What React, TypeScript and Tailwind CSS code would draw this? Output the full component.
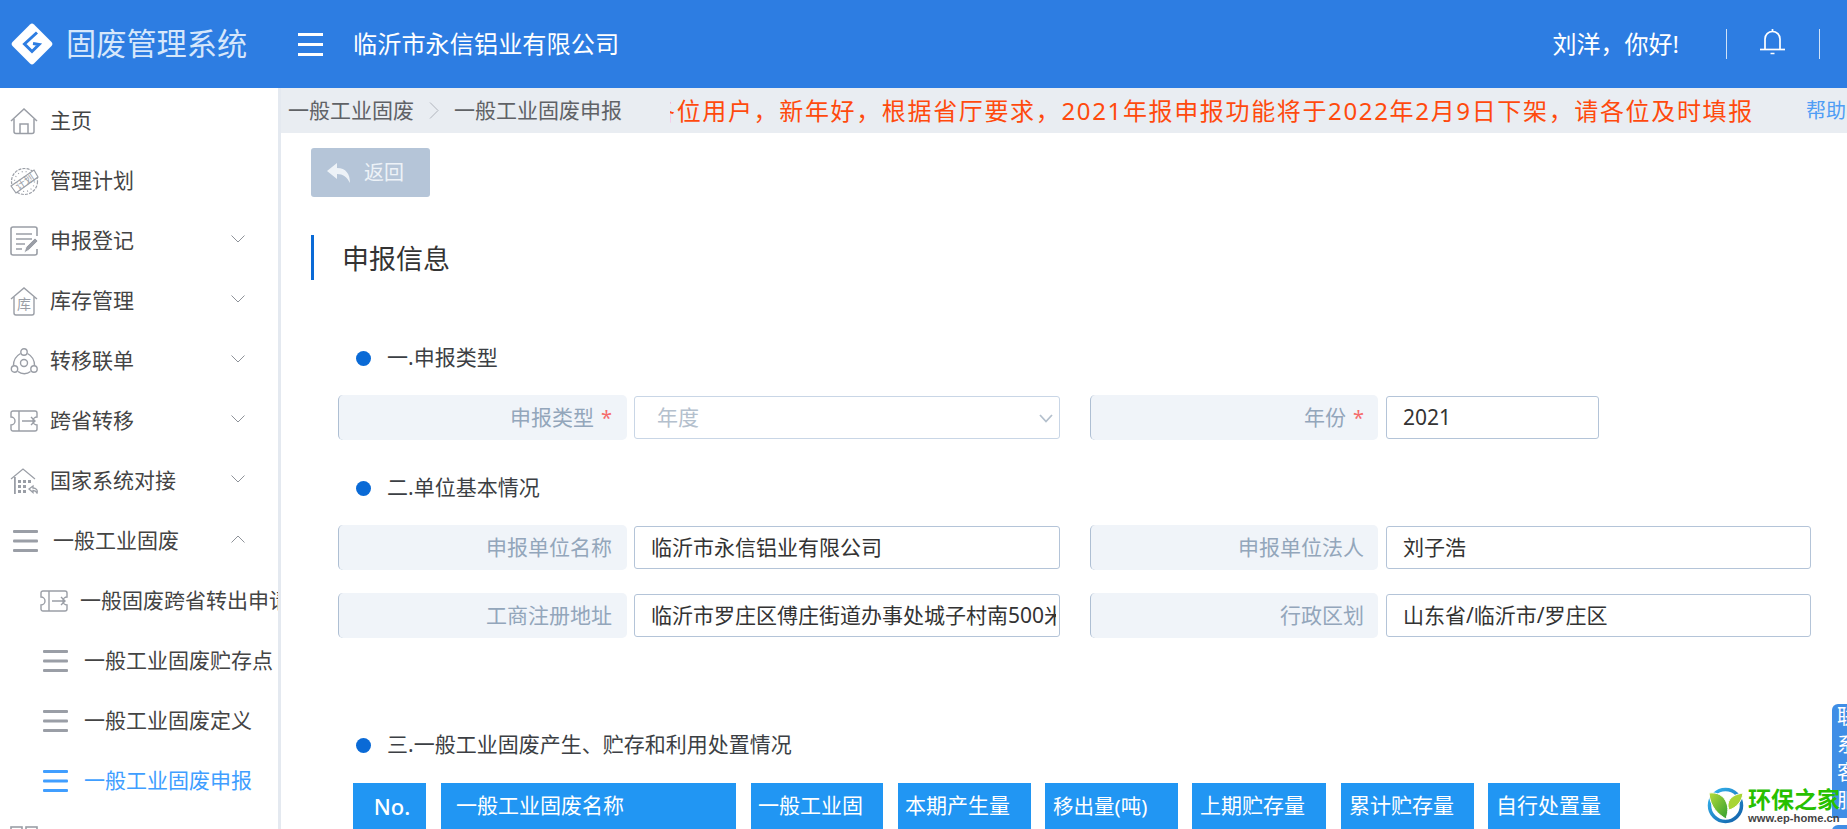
import type { ReactNode } from "react";

const GREY = "#9a9ea6";

const HomeIcon = () => (
  <svg className="shrink-0" width="28" height="27" viewBox="0 0 28 27" fill="none" stroke={GREY} strokeWidth="1.5">
    <path d="M1 13 14 1l13 12" />
    <path d="M4 11v12.500a2 2 0 0 0 2 2h16a2 2 0 0 0 2-2V11" />
    <path d="M10 25.500V16h8v9.500" />
  </svg>
);

const PlanIcon = () => (
  <svg className="shrink-0" width="29" height="31" viewBox="0 0 29 31" fill="none" stroke={GREY} strokeWidth="1.200">
    <circle cx="14.500" cy="15.500" r="13" strokeDasharray="3 1.200" />
    <circle cx="14.500" cy="15.500" r="10" strokeDasharray="1 3" />
    <path d="M1 20 24 4l4 7L6 27z" fill="#fff" />
    <text x="14.500" y="19.500" fontSize="10" fill={GREY} stroke="none" textAnchor="middle" transform="rotate(-33 14.500 15.500)">
      计划
    </text>
  </svg>
);

const DocIcon = () => (
  <svg className="shrink-0" width="28" height="30" viewBox="0 0 28 30" fill="none" stroke={GREY} strokeWidth="1.600">
    <path d="M27 10V3a2 2 0 0 0-2-2H3a2 2 0 0 0-2 2v24a2 2 0 0 0 2 2h22a2 2 0 0 0 2-2v-4" />
    <path d="M6 8h16M6 13h16M6 18h9M6 23h6" />
    <path d="M14 27l2-6 9-9 3 3-9 9z" fill={GREY} stroke="#fff" strokeWidth=".8" />
  </svg>
);

const StoreIcon = () => (
  <svg className="shrink-0" width="28" height="29" viewBox="0 0 28 29" fill="none" stroke={GREY} strokeWidth="1.400">
    <path d="M1 12 14 1l13 11" />
    <path d="M4 10v16a2 2 0 0 0 2 2h16a2 2 0 0 0 2-2V10" />
    <text x="14" y="22" fontSize="14" fill={GREY} stroke="none" textAnchor="middle">
      库
    </text>
  </svg>
);

const ShareIcon = () => (
  <svg className="shrink-0" width="28" height="27" viewBox="0 0 28 27" fill="none" stroke={GREY} strokeWidth="1.400">
    <circle cx="14" cy="4" r="3.200" />
    <circle cx="4.500" cy="21" r="3.200" />
    <circle cx="24" cy="21" r="3.200" />
    <circle cx="14" cy="15" r="3.500" />
    <path d="M10.500 5.500C6 8 3.500 12 3.500 17.500M17.500 5.500C22 8 24.500 12 24.500 17.500M8 23.500c3.500 3 9 3 12.500 0" />
  </svg>
);

const TicketIcon = () => (
  <svg className="shrink-0" width="28" height="22" viewBox="0 0 28 22" fill="none" stroke={GREY} strokeWidth="1.400">
    <path d="M3 1h22a2 2 0 0 1 2 2v4a4 4 0 0 0 0 8v4a2 2 0 0 1-2 2H3a2 2 0 0 1-2-2v-4a4 4 0 0 0 0-8V3a2 2 0 0 1 2-2z" />
    <path d="M9 1v20M12 11h13M21 7l4 4-4 4" />
  </svg>
);

const BuildingIcon = () => (
  <svg className="shrink-0" width="28" height="26" viewBox="0 0 28 26" fill={GREY} stroke="none">
    <path d="M1 11 13 1l12 10" fill="none" stroke={GREY} strokeWidth="1.200" />
    <path d="M4 9h1.800v17H4z" />
    <path d="M8 12h3v3H8zM13 12h3v3h-3zM18 12h3v3h-3zM8 17h3v3H8zM13 17h3v3h-3zM8 22h3v3H8zM13 22h3v3h-3z" />
    <path d="M19 21l4-3v2c3 0 5 2 4 5-1-2-2-2.500-4-2.500v2z" fill="none" stroke={GREY} strokeWidth="1.300" />
  </svg>
);

const BarsIcon = ({ color = GREY }: { color?: string }) => (
  <svg className="shrink-0" width="25" height="22" viewBox="0 0 25 22" fill={color}>
    <rect y="0" width="25" height="3" rx="1" />
    <rect y="9.500" width="25" height="3" rx="1" />
    <rect y="19" width="25" height="3" rx="1" />
  </svg>
);

const GridIcon = () => (
  <svg className="shrink-0" width="28" height="30" viewBox="0 0 28 30" fill="none" stroke={GREY} strokeWidth="1.600">
    <rect x="1" y="1" width="11" height="12" />
    <rect x="16" y="1" width="11" height="12" />
  </svg>
);

const Chevron = ({ up = false }: { up?: boolean }) => (
  <svg width="14" height="8" viewBox="0 0 14 8" fill="none" stroke="#8e9299" strokeWidth="1" className="-mt-1 shrink-0">
    <path d={up ? "M.5 7.500 7 1l6.500 6.500" : "M.5.500 7 7 13.500.500"} />
  </svg>
);

const NavItem = ({ icon, label, open, up }: { icon: ReactNode; label: string; open?: boolean; up?: boolean }) => (
  <div className="flex h-[60px] items-center pl-[10px] pr-[33px]">
    <span className="flex w-[28px] shrink-0 justify-center">{icon}</span>
    <span className="ml-[12px] text-[21px] text-[#444]">{label}</span>
    {open && (
      <span className="ml-auto flex">
        <Chevron up={up} />
      </span>
    )}
  </div>
);

const SubItem = ({ icon, label, active }: { icon: ReactNode; label: string; active?: boolean }) => (
  <div className={`flex h-[60px] items-center pl-[43px] ${active ? "text-[#409eff]" : "text-[#444]"}`}>
    <span className="flex w-[25px] shrink-0">{icon}</span>
    <span className="ml-[16px] whitespace-nowrap text-[21px]">{label}</span>
  </div>
);

const Sidebar = () => (
  <aside className="h-full w-[281px] shrink-0 overflow-hidden border-r-[3px] border-[#e4e9f0] bg-white pt-[3px]">
    <NavItem icon={<HomeIcon />} label="主页" />
    <NavItem icon={<PlanIcon />} label="管理计划" />
    <NavItem icon={<DocIcon />} label="申报登记" open />
    <NavItem icon={<StoreIcon />} label="库存管理" open />
    <NavItem icon={<ShareIcon />} label="转移联单" open />
    <NavItem icon={<TicketIcon />} label="跨省转移" open />
    <NavItem icon={<BuildingIcon />} label="国家系统对接" open />
    <div className="flex h-[60px] items-center pl-[13px] pr-[33px]">
      <BarsIcon />
      <span className="ml-[15px] text-[21px] text-[#444]">一般工业固废</span>
      <span className="ml-auto flex">
        <Chevron up />
      </span>
    </div>
    <div className="flex h-[60px] items-center pl-[40px] text-[#444]">
      <TicketIcon />
      <span className="ml-[12px] whitespace-nowrap text-[21px]">一般固废跨省转出申请</span>
    </div>
    <SubItem icon={<BarsIcon />} label="一般工业固废贮存点" />
    <SubItem icon={<BarsIcon />} label="一般工业固废定义" />
    <SubItem icon={<BarsIcon color="#409eff" />} label="一般工业固废申报" active />
    <div className="flex h-[60px] items-center pl-[10px]">
      <GridIcon />
    </div>
  </aside>
);

const Header = () => (
  <header className="flex h-[88px] shrink-0 items-center bg-[#2d7de2] pl-[11px] pr-[27px] text-white">
    <svg className="shrink-0" width="42" height="42" viewBox="0 0 42 42">
      <path d="M19 1.500a3 3 0 0 1 4 0l17.500 17.500a3 3 0 0 1 0 4L23 40.500a3 3 0 0 1-4 0L1.500 23a3 3 0 0 1 0-4z" fill="#fff" />
      <path d="M26 9.500 13.500 21l7.500 7.500L28 21.500l-6-1" fill="none" stroke="#2d7de2" strokeWidth="3" />
    </svg>
    <span className="ml-[13px] w-[181px] whitespace-nowrap text-[30.200px] text-[#d6e7fb]">固废管理系统</span>
    <span className="ml-[51px] flex flex-col gap-[7px]">
      <i className="block h-[3px] w-[25px] bg-white" />
      <i className="block h-[3px] w-[25px] bg-white" />
      <i className="block h-[3px] w-[25px] bg-white" />
    </span>
    <span className="ml-[30px] whitespace-nowrap text-[24.200px]">临沂市永信铝业有限公司</span>
    <span className="ml-auto whitespace-nowrap text-[24px]">刘洋，你好!</span>
    <i className="ml-[47px] block h-[30px] w-px bg-[#cfe2f8]" />
    <svg className="ml-[32px] -mt-[5px] shrink-0" width="27" height="27" viewBox="0 0 27 27" fill="none" stroke="#fff" strokeWidth="1.700">
      <path d="M6 21.500V11a7.500 7.500 0 0 1 15 0v10.500" />
      <path d="M13.500 3.500V1" />
      <path d="M1 21.500h25" />
      <path d="M11.500 25.500h4" strokeWidth="1.500" />
    </svg>
    <i className="ml-[33px] block h-[30px] w-px bg-[#cfe2f8]" />
  </header>
);

const Crumbs = () => (
  <div className="flex h-[45px] shrink-0 items-center whitespace-nowrap bg-[#e9edf2] pl-[7px]">
    <span className="shrink-0 text-[21px] text-[#606266]">一般工业固废</span>
    <svg className="mx-[15px] shrink-0" width="10" height="17" viewBox="0 0 10 17" fill="none" stroke="#b0b4bc" strokeWidth="1">
      <path d="M1 .500 9 8.500l-8 8" />
    </svg>
    <span className="shrink-0 text-[21px] text-[#606266]">一般工业固废申报</span>
    <div className="ml-[48px] w-[1120px] shrink-0 overflow-hidden">
      <div className="-ml-[19px] text-[24px] tracking-[1.650px] text-[#ff4a0d]">
        各位用户，新年好，根据省厅要求，2021年报申报功能将于2022年2月9日下架，请各位及时填报
      </div>
    </div>
    <span className="ml-[16px] shrink-0 text-[20px] text-[#4f9df5]">帮助中心</span>
  </div>
);

const SectionHead = ({ children, className }: { children: string; className: string }) => (
  <div className={`ml-[75px] flex h-[30px] items-center gap-[16px] ${className}`}>
    <i className="block h-[15px] w-[15px] rounded-full bg-[#0a6ad6]" />
    <span className="text-[21px] text-[#3c3f44]">{children}</span>
  </div>
);

const Label = ({ text, required, pad, width }: { text: string; required?: boolean; pad: string; width: string }) => (
  <div
    className={`flex h-[45px] ${width} ${pad} shrink-0 items-center justify-end rounded-[5px] border-l border-[#aebfd3] bg-[#f0f4f9] pt-px text-[21px] text-[#93a6bb]`}
  >
    {text}
    {required && <span className="ml-[7px] text-[20px] text-[#f56c6c]">*</span>}
  </div>
);

const Field = ({ value, width }: { value: string; width: string }) => (
  <div
    className={`flex h-[43px] ${width} shrink-0 items-center rounded-[3px] border border-[#b4c4d8] bg-white pl-[16px] pr-[3px] pt-px text-[21px] text-[#333]`}
  >
    <span className="min-w-0 overflow-hidden whitespace-nowrap">{value}</span>
  </div>
);

const Form = () => (
  <>
    <SectionHead className="mt-[63px]">一.申报类型</SectionHead>
    <div className="ml-[57px] mt-[22px] flex items-center">
      <Label text="申报类型" required pad="pr-[15px]" width="w-[289px]" />
      <div className="ml-[7px] flex h-[43px] w-[426px] items-center justify-between rounded-[3px] border border-[#c9d6e6] bg-white pl-[22px] pr-[6px] pt-px text-[21px] text-[#b4c0cd]">
        年度
        <svg className="shrink-0" width="14" height="9" viewBox="0 0 14 9" fill="none" stroke="#b4c0cd" strokeWidth="1.800">
          <path d="M1 1l6 6.500L13 1" />
        </svg>
      </div>
      <div className="ml-[30px]">
        <Label text="年份" required pad="pr-[14px]" width="w-[288px]" />
      </div>
      <div className="ml-[8px]">
        <Field value="2021" width="w-[213px]" />
      </div>
    </div>
    <SectionHead className="mt-[33px]">二.单位基本情况</SectionHead>
    <div className="ml-[57px] mt-[22px] flex items-center">
      <Label text="申报单位名称" pad="pr-[15px]" width="w-[289px]" />
      <div className="ml-[7px]">
        <Field value="临沂市永信铝业有限公司" width="w-[426px]" />
      </div>
      <div className="ml-[30px]">
        <Label text="申报单位法人" pad="pr-[14px]" width="w-[288px]" />
      </div>
      <div className="ml-[8px]">
        <Field value="刘子浩" width="w-[425px]" />
      </div>
    </div>
    <div className="ml-[57px] mt-[23px] flex items-center">
      <Label text="工商注册地址" pad="pr-[15px]" width="w-[289px]" />
      <div className="ml-[7px]">
        <Field value="临沂市罗庄区傅庄街道办事处城子村南500米" width="w-[426px]" />
      </div>
      <div className="ml-[30px]">
        <Label text="行政区划" pad="pr-[14px]" width="w-[288px]" />
      </div>
      <div className="ml-[8px]">
        <Field value="山东省/临沂市/罗庄区" width="w-[425px]" />
      </div>
    </div>
  </>
);

const columns = [
  { label: "No.", cls: "w-[73px] justify-center pl-[5px] text-[22px] font-medium" },
  { label: "一般工业固废名称", cls: "ml-[15px] w-[295px] pl-[15px] text-[21px]" },
  { label: "一般工业固", cls: "ml-[15px] w-[132px] pl-[7px] text-[21px]" },
  { label: "本期产生量", cls: "ml-[15px] w-[133px] pl-[7px] text-[21px]" },
  { label: "移出量(吨)", cls: "ml-[14px] w-[133px] pl-[8px] text-[20.500px]" },
  { label: "上期贮存量", cls: "ml-[14px] w-[134px] pl-[8px] text-[21px]" },
  { label: "累计贮存量", cls: "ml-[15px] w-[133px] pl-[8px] text-[21px]" },
  { label: "自行处置量", cls: "ml-[14px] w-[132px] pl-[8px] text-[21px]" },
];

const WasteTable = () => (
  <div className="ml-[72px] mt-[23px] flex">
    {columns.map((col) => (
      <div key={col.label} className={`flex h-[46px] shrink-0 items-center whitespace-nowrap bg-[#2196f3] text-white ${col.cls}`}>
        {col.label}
      </div>
    ))}
  </div>
);

const Watermark = () => (
  <div className="absolute left-[1707px] top-[787px] flex items-start">
    <svg className="shrink-0" width="37" height="37" viewBox="0 0 37 37" fill="none">
      <defs>
        <linearGradient id="leafA" x1="0" y1="0" x2="1" y2="1">
          <stop offset="0" stopColor="#b7dc3a" />
          <stop offset="1" stopColor="#2f9e2f" />
        </linearGradient>
        <linearGradient id="ringA" x1="0" y1="0" x2="1" y2="1">
          <stop offset="0" stopColor="#35b6f0" />
          <stop offset="1" stopColor="#125fa8" />
        </linearGradient>
      </defs>
      <circle cx="18.500" cy="18.500" r="16" stroke="url(#ringA)" strokeWidth="3.500" />
      <path d="M2 6c8-1 15 2 18 11 2 6 0 11-1 15C11 27 3 20 2 6z" fill="url(#leafA)" stroke="#fff" strokeWidth="1" />
      <path d="M36 6c-7 1-14 4-15 11 0 2 0 3 1 6 7-2 13-8 14-17z" fill="#a8d535" stroke="#fff" strokeWidth="1" />
    </svg>
    <div className="ml-[4px] flex flex-col whitespace-nowrap">
      <span className="text-[23px] font-bold leading-[24px] text-[#27c000]">环保之家</span>
      <span className="font-['Liberation_Sans',sans-serif] text-[11.200px] font-bold leading-[14px] text-[#444]">www.ep-home.cn</span>
    </div>
  </div>
);

const FloatTabs = () => (
  <>
    <div className="absolute right-0 top-[704px] flex h-[114px] w-[15px] flex-col gap-[8px] overflow-hidden rounded-tl-[6px] bg-[#3f8ee6] pl-[5px] pt-[3px] text-[20px] leading-[20px] text-white">
      <span className="whitespace-nowrap">联</span>
      <span className="whitespace-nowrap">系</span>
      <span className="whitespace-nowrap">客</span>
      <span className="whitespace-nowrap">服</span>
    </div>
    <div className="absolute right-0 top-[825px] h-[20px] w-[15px] rounded-tl-[6px] bg-[#3f8ee6]" />
  </>
);

export default function App() {
  return (
    <div className="relative flex h-screen w-screen flex-col overflow-hidden bg-white font-['Noto_Sans','Noto_Sans_CJK_SC',sans-serif]">
      <Header />
      <div className="flex min-h-0 flex-1">
        <Sidebar />
        <main className="min-w-0 flex-1">
          <Crumbs />
          <button className="ml-[30px] mt-[15px] flex h-[49px] w-[119px] items-center rounded-[3px] bg-[#b5c5d8] pl-[16px] text-[20px] text-[#edf2f7]">
            <svg className="shrink-0" width="24" height="20" viewBox="0 0 24 20" fill="#edf2f7">
              <path d="M10 0 0 8l10 8v-5c6 0 10 3 13 9 0-9-4-15-13-15z" />
            </svg>
            <span className="ml-[13px]">返回</span>
          </button>
          <div className="ml-[30px] mt-[38px] flex h-[45px] items-center border-l-[3px] border-[#0a6ad6] pl-[28px] pt-[3px] text-[27px] text-[#333]">
            申报信息
          </div>
          <Form />
          <SectionHead className="mt-[92px]">三.一般工业固废产生、贮存和利用处置情况</SectionHead>
          <WasteTable />
        </main>
      </div>
      <FloatTabs />
      <Watermark />
    </div>
  );
}
